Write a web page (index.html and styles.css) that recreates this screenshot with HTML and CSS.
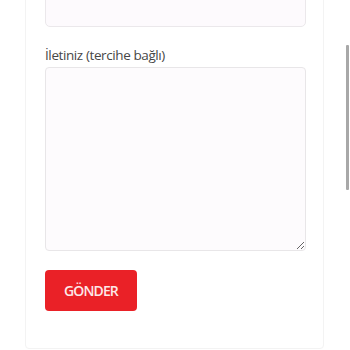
FILE: index.html
```html
<!DOCTYPE html>
<html lang="tr">
<head>
    <meta charset="UTF-8">
    <title>İletişim</title>
    <link rel="stylesheet" href="styles.css">
</head>
<body>
    <div class="page">
        <form class="card">
            <div class="field field-top">
                <input class="input" type="text">
            </div>
            <div class="field">
                <label class="label">İletiniz (tercihe bağlı)</label>
                <textarea class="textarea"></textarea>
            </div>
            <button class="btn" type="button">GÖNDER</button>
        </form>
        <div class="scrollbar"></div>
    </div>
</body>
</html>
```

FILE: styles.css
```css
/* genel */
body {
    margin: 0;
    background: #fff;
    font-family: "Open Sans", "Noto Sans", sans-serif;
    overflow: hidden;
}

.page {
    position: relative;
    width: 350px;
    height: 350px;
    overflow: hidden;
}

/* kart */
.card {
    box-sizing: border-box;
    width: 299px;
    margin-left: 25px;
    margin-top: -40px;
    height: 389px;
    padding: 0 19px 0 19px;
    border: 1px solid #f3f3f3;
    border-radius: 4px;
    background: #fff;
}

.field-top .input {
    display: block;
    box-sizing: border-box;
    width: 261px;
    height: 66px;
    border: 1px solid #ebe8eb;
    border-radius: 5px;
    background: #fdfafd;
}

.field {
    margin-bottom: 19px;
}

.label {
    display: block;
    margin-top: 18px;
    margin-bottom: 3px;
    font-size: 13.5px;
    line-height: 18px;
    letter-spacing: -0.4px;
    color: #474747;
}

.textarea {
    display: block;
    box-sizing: border-box;
    width: 261px;
    height: 184px;
    border: 1px solid #e8e6e8;
    border-radius: 4px;
    background: #fdfbfd;
    resize: vertical;
}

/* buton */
.btn {
    width: 92px;
    height: 41px;
    border: none;
    border-radius: 4px;
    background: #ea2127;
    color: #fde8e8;
    font-family: "Open Sans", "Noto Sans", sans-serif;
    font-size: 14px;
    font-weight: 600;
    letter-spacing: -0.9px;
}

/* kaydırma çubuğu */
.scrollbar {
    position: absolute;
    right: 1px;
    top: 45px;
    width: 3px;
    height: 145px;
    background: #a8a8a8;
    border-radius: 1px;
}
```
